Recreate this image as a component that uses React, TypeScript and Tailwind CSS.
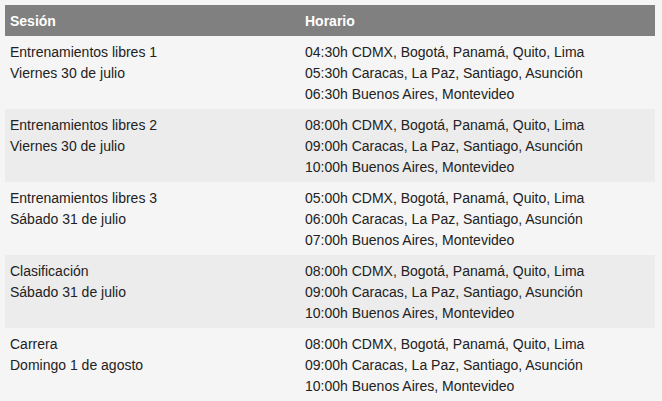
import React from 'react';

interface Session {
  name: string;
  date: string;
  times: string[];
}

const sessions: Session[] = [
  {
    name: 'Entrenamientos libres 1',
    date: 'Viernes 30 de julio',
    times: [
      '04:30h CDMX, Bogotá, Panamá, Quito, Lima',
      '05:30h Caracas, La Paz, Santiago, Asunción',
      '06:30h Buenos Aires, Montevideo',
    ],
  },
  {
    name: 'Entrenamientos libres 2',
    date: 'Viernes 30 de julio',
    times: [
      '08:00h CDMX, Bogotá, Panamá, Quito, Lima',
      '09:00h Caracas, La Paz, Santiago, Asunción',
      '10:00h Buenos Aires, Montevideo',
    ],
  },
  {
    name: 'Entrenamientos libres 3',
    date: 'Sábado 31 de julio',
    times: [
      '05:00h CDMX, Bogotá, Panamá, Quito, Lima',
      '06:00h Caracas, La Paz, Santiago, Asunción',
      '07:00h Buenos Aires, Montevideo',
    ],
  },
  {
    name: 'Clasificación',
    date: 'Sábado 31 de julio',
    times: [
      '08:00h CDMX, Bogotá, Panamá, Quito, Lima',
      '09:00h Caracas, La Paz, Santiago, Asunción',
      '10:00h Buenos Aires, Montevideo',
    ],
  },
  {
    name: 'Carrera',
    date: 'Domingo 1 de agosto',
    times: [
      '08:00h CDMX, Bogotá, Panamá, Quito, Lima',
      '09:00h Caracas, La Paz, Santiago, Asunción',
      '10:00h Buenos Aires, Montevideo',
    ],
  },
];

export default function App() {
  return (
    <div className="min-h-screen bg-[#f5f5f5] p-[5px] font-['Liberation_Sans',Arial,sans-serif] text-[14px] leading-[21px] text-[#222]">
      <table className="w-[650px] border-collapse">
        <thead>
          <tr className="bg-[#808080] text-white">
            <th className="w-[295px] px-[5px] pt-[6px] pb-[4px] text-left font-bold">Sesión</th>
            <th className="px-[5px] pt-[6px] pb-[4px] text-left font-bold">Horario</th>
          </tr>
        </thead>
        <tbody>
          {sessions.map((s, i) => (
            <tr key={s.name} className={i % 2 === 1 ? 'bg-[#ececec]' : 'bg-[#f5f5f5]'}>
              <td className="h-[73px] px-[5px] pt-[6px] pb-[4px] align-top">
                <div>{s.name}</div>
                <div>{s.date}</div>
              </td>
              <td className="px-[5px] pt-[6px] pb-[4px] align-top">
                {s.times.map((t) => (
                  <div key={t}>{t}</div>
                ))}
              </td>
            </tr>
          ))}
        </tbody>
      </table>
    </div>
  );
}
